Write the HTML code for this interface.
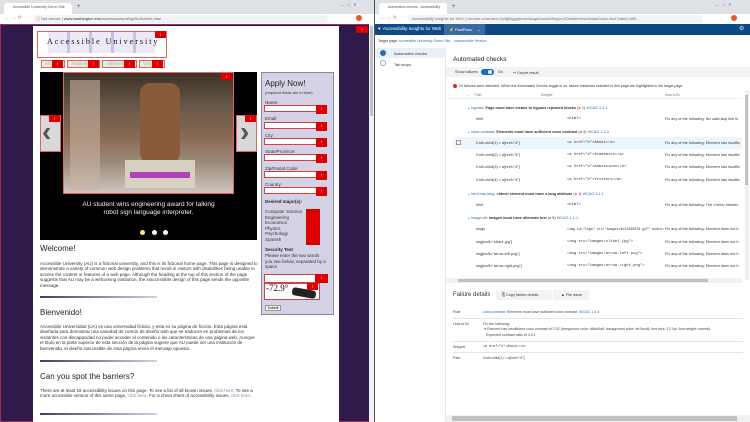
<!DOCTYPE html>
<html><head><meta charset="utf-8"><style>
*{margin:0;padding:0;box-sizing:border-box}
body{width:750px;height:422px;overflow:hidden;position:relative;font-family:"Liberation Sans",sans-serif;background:#fff}
.a{position:absolute}
.t{position:absolute;white-space:nowrap}
.bang{position:absolute;background:#d00;width:11px;height:7px;color:#fff;font-size:4px;text-align:center;line-height:7px}
.bang::after{content:"!"}
.inp{position:absolute;left:264px;width:63px;height:7px;background:#fff;border:1px solid #c44}
.lbl{position:absolute;left:265px;font-size:4.5px;color:#333}
.mono{font-family:"Liberation Mono",monospace}
.row{position:absolute;left:446px;width:296px;height:12px;font-size:3.8px;color:#333}
.row span{position:absolute;top:4px;white-space:nowrap}
.hline{position:absolute;left:40px;width:117px;height:2px;background:linear-gradient(90deg,#4a3a6a,#d8d0e4)}
.p{position:absolute;left:40px;width:218px;font-size:4.5px;line-height:5.4px;color:#333}
.h{position:absolute;left:40px;font-size:8px;color:#222}
.nb{position:absolute;top:60px;height:8px;background:#efecde;border:1px solid #d66;font-size:4.5px;color:#aaa;line-height:6px;padding-left:3px;overflow:hidden}
</style></head><body>
<!-- LEFT WINDOW -->
<div class="a" style="left:0;top:0;width:374px;height:14px;background:#dee1e6"></div>
<div class="a" style="left:4px;top:3px;width:68px;height:11px;background:#fff;border-radius:3px 3px 0 0"></div>
<div class="t" style="left:13px;top:5px;font-size:3.6px;color:#555">Accessible University Demo Site</div>
<div class="t" style="left:77px;top:4px;font-size:6px;color:#555">+</div>
<div class="t" style="left:340px;top:2px;font-size:4px;color:#666">—&nbsp;&nbsp;&nbsp;□&nbsp;&nbsp;&nbsp;✕</div>
<div class="a" style="left:0;top:14px;width:374px;height:10px;background:#fff"></div>
<div class="t" style="left:5px;top:15px;font-size:5px;color:#888">← → ⟳</div>
<div class="a" style="left:33px;top:15px;width:295px;height:8px;background:#f1f3f4;border-radius:4px"></div>
<div class="t" style="left:36px;top:16px;font-size:4px;color:#666">ⓘ Not secure | <b style="color:#333;font-weight:normal">www.washington.edu</b>/accesscomputing/AU/before.html</div>
<div class="a" style="left:356px;top:15px;width:6px;height:6px;border-radius:50%;background:#e8572a"></div>
<!-- page -->
<div class="a" style="left:0;top:24px;width:371px;height:398px;background:#2e1a4b;border:1px solid #a0305a"></div>
<div class="a" style="left:369px;top:24px;width:5px;height:398px;background:#f1f1f1"></div>
<div class="a" style="left:370px;top:26px;width:3px;height:90px;background:#c1c1c1"></div>
<div class="bang" style="left:356px;top:26px;width:12px"></div>
<div class="a" style="left:33px;top:26px;width:306px;height:396px;background:#fff"></div>
<!-- logo -->
<div class="a" style="left:37px;top:31px;width:130px;height:27px;border:1px solid #d66"></div>
<div class="a" style="left:48px;top:32px;width:107px;height:21px;background:repeating-linear-gradient(90deg,#eceaf6 0 19px,#c7c2e0 19px 22px)"></div>
<div class="t" style="left:47px;top:37px;font-family:'Liberation Serif',serif;font-size:8px;letter-spacing:2px;color:#111">Accessible University</div>
<div class="bang" style="left:155px;top:31px"></div>
<div class="nb" style="left:41px;width:24px">About</div><div class="bang" style="left:52px;top:60px;height:8px"></div>
<div class="nb" style="left:67px;width:33px">Academics</div><div class="bang" style="left:88px;top:60px;height:8px"></div>
<div class="nb" style="left:102px;width:35px">Admissions</div><div class="bang" style="left:124px;top:60px;height:8px"></div>
<div class="nb" style="left:139px;width:26px">Visitors</div><div class="bang" style="left:152px;top:60px;height:8px"></div>
<!-- slideshow -->
<div class="a" style="left:40px;top:72px;width:217px;height:168px;background:#000"></div>
<div class="a" style="left:63px;top:72px;width:171px;height:122px;border:1px solid #d66;background:linear-gradient(180deg,#3d3328 0%,#6b5a48 30%,#8a6b55 55%,#9c8c7a 75%,#cfc6c0 100%)"></div>
<div class="a" style="left:140px;top:83px;width:40px;height:80px;background:#8b5a3a;border-radius:10px"></div>
<div class="a" style="left:70px;top:80px;width:30px;height:110px;background:#c9b2a0;opacity:.6"></div>
<div class="a" style="left:125px;top:160px;width:70px;height:28px;background:#d8d0c0"></div>
<div class="a" style="left:130px;top:172px;width:60px;height:6px;background:#b040c0"></div>
<div class="bang" style="left:221px;top:73px"></div>
<div class="a" style="left:40px;top:115px;width:21px;height:37px;background:#d8d8d8;border:1px solid #d66"></div>
<div class="t" style="left:42px;top:116px;font-size:28px;font-weight:bold;color:#555">‹</div>
<div class="bang" style="left:49px;top:115px"></div>
<div class="a" style="left:236px;top:115px;width:21px;height:37px;background:#d8d8d8;border:1px solid #d66"></div>
<div class="t" style="left:240px;top:116px;font-size:28px;font-weight:bold;color:#555">›</div>
<div class="bang" style="left:245px;top:115px"></div>
<div class="t" style="left:40px;top:201px;width:217px;text-align:center;font-size:6.5px;color:#eee;line-height:8px;white-space:normal">AU student wins engineering award for talking<br>robot sign language interpreter.</div>
<div class="a" style="left:140px;top:230px;width:5px;height:5px;border-radius:50%;background:#ffea80"></div>
<div class="a" style="left:152px;top:230px;width:5px;height:5px;border-radius:50%;background:#fff"></div>
<div class="a" style="left:163px;top:230px;width:5px;height:5px;border-radius:50%;background:#fff"></div>
<!-- form -->
<div class="a" style="left:261px;top:72px;width:73px;height:243px;background:#d5d2e6;border:1px solid #8a86a4"></div>
<div class="t" style="left:265px;top:79px;font-size:8px;color:#222">Apply Now!</div>
<div class="t" style="left:265px;top:90px;font-size:4px;color:#333">(required fields are in blue)</div>
<div class="lbl" style="top:100px">Name:</div><div class="inp" style="top:105px"></div><div class="bang" style="left:316px;top:105px;height:9px"></div>
<div class="lbl" style="top:116px">Email:</div><div class="inp" style="top:122px"></div><div class="bang" style="left:316px;top:122px;height:9px"></div>
<div class="lbl" style="top:133px">City:</div><div class="inp" style="top:138px"></div><div class="bang" style="left:316px;top:138px;height:9px"></div>
<div class="lbl" style="top:149px">State/Province:</div><div class="inp" style="top:154px"></div><div class="bang" style="left:316px;top:154px;height:9px"></div>
<div class="lbl" style="top:166px">Zip/Postal Code:</div><div class="inp" style="top:171px"></div><div class="bang" style="left:316px;top:171px;height:9px"></div>
<div class="lbl" style="top:182px">Country:</div><div class="inp" style="top:187px"></div><div class="bang" style="left:316px;top:187px;height:9px"></div>
<div class="t" style="left:265px;top:199px;font-size:4.5px;font-weight:bold;color:#222">Desired major(s):</div>
<div class="t" style="left:265px;top:209px;font-size:4.5px;color:#333;line-height:5.5px">Computer Science<br>Engineering<br>Economics<br>Physics<br>Psychology<br>Spanish</div>
<div class="a" style="left:306px;top:209px;width:14px;height:36px;background:#d00"></div>
<div class="t" style="left:265px;top:247px;font-size:4.5px;font-weight:bold;color:#222">Security Test</div>
<div class="t" style="left:265px;top:253px;font-size:4.5px;color:#333;line-height:5.5px">Please enter the two words<br>you see below, separated by a<br>space</div>
<div class="a" style="left:264px;top:274px;width:64px;height:9px;background:#fff;border:1px solid #c44"></div><div class="bang" style="left:315px;top:274px;height:9px;width:13px"></div>
<div class="a" style="left:264px;top:283px;width:56px;height:17px;background:#fff;border:1px solid #c44"></div>
<div class="t" style="left:266px;top:283px;font-family:'Liberation Serif',serif;font-size:9px;color:#111">-72.9°</div>
<div class="a" style="left:292px;top:289px;width:24px;height:8px;background:#222;transform:rotate(10deg);border-radius:3px"></div>
<div class="bang" style="left:307px;top:283px;height:7px"></div>
<div class="a" style="left:265px;top:305px;width:16px;height:6px;background:#f4f4f4;border:1px solid #999;font-size:3.5px;text-align:center;line-height:4px">Submit</div>
<!-- text -->
<div class="h" style="top:244px">Welcome!</div>
<div class="p" style="top:261px">Accessible University (AU) is a fictional university, and this is its fictional home page. This page is designed to demonstrate a variety of common web design problems that result in visitors with disabilities being unable to access the content or features of a web page. Although the heading at the top of this section of the page suggests that AU may be a welcoming institution, the inaccessible design of this page sends the opposite message.</div>
<div class="hline" style="top:296px"></div>
<div class="h" style="top:308px">Bienvenido!</div>
<div class="p" style="top:324px">Accessible Universidad (UA) es una universidad ficticia, y esta es su página de ficción. Esta página está diseñada para demostrar una variedad de común de diseño web que se traducen en problemas de los visitantes con discapacidad no poder acceder al contenido o las características de una página web. Aunque el título en la parte superior de esta sección de la página sugiere que AU puede ser una institución de bienvenida, el diseño inaccesible de esta página envía el mensaje opuesto.</div>
<div class="hline" style="top:360px"></div>
<div class="h" style="top:372px">Can you spot the barriers?</div>
<div class="p" style="top:388px">There are at least 18 accessibility issues on this page. To see a list of all known issues, <span style="color:#88a">click here</span>. To see a more accessible version of this same page, <span style="color:#88a">click here</span>. For a cheat sheet of accessibility issues, <span style="color:#88a">click here</span>.</div>
<div class="hline" style="top:413px"></div>

<!-- RIGHT WINDOW -->
<div class="a" style="left:374px;top:0;width:1px;height:422px;background:#555"></div>
<div class="a" style="left:375px;top:0;width:375px;height:14px;background:#dee1e6"></div>
<div class="a" style="left:379px;top:3px;width:68px;height:11px;background:#fff;border-radius:3px 3px 0 0"></div>
<div class="t" style="left:388px;top:5px;font-size:3.6px;color:#555">Automated checks - Accessibility</div>
<div class="t" style="left:452px;top:4px;font-size:6px;color:#555">+</div>
<div class="t" style="left:715px;top:2px;font-size:4px;color:#666">—&nbsp;&nbsp;&nbsp;□&nbsp;&nbsp;&nbsp;✕</div>
<div class="a" style="left:375px;top:14px;width:375px;height:10px;background:#fff"></div>
<div class="t" style="left:380px;top:15px;font-size:5px;color:#888">← → ⟳</div>
<div class="a" style="left:408px;top:15px;width:295px;height:8px;background:#f1f3f4;border-radius:4px"></div>
<div class="t" style="left:412px;top:16px;font-size:4px;color:#777">Accessibility Insights for Web | chrome-extension://pbjjkligggfmakdaogkfomddhfmpjeni/DetailsView/detailsView.html?tabId=655</div>
<div class="a" style="left:731px;top:15px;width:6px;height:6px;border-radius:50%;background:#e8572a"></div>
<div class="a" style="left:375px;top:24px;width:375px;height:11px;background:#0f4a85"></div>
<div class="t" style="left:378px;top:26px;font-size:4.5px;color:#fff">♥&nbsp; Accessibility Insights for Web</div>
<div class="a" style="left:444px;top:24px;width:41px;height:11px;background:#3a6aa0"></div>
<div class="t" style="left:449px;top:27px;font-size:4px;color:#fff">⚡ FastPass &nbsp;&nbsp;&nbsp;&nbsp;⌄</div>
<div class="t" style="left:739px;top:25px;font-size:6px;color:#cde">⚙</div>
<div class="t" style="left:378px;top:39px;font-size:3.6px;color:#333">Target page: <span style="color:#3a6fb0">Accessible University Demo Site - Inaccessible Version</span></div>
<div class="a" style="left:375px;top:47px;width:71px;height:375px;background:#fff;border-right:1px solid #e6e6e6"></div>
<div class="a" style="left:375px;top:48px;width:71px;height:10px;background:#eaf0f8"></div>
<div class="a" style="left:380px;top:50px;width:6px;height:6px;border-radius:50%;background:#2b6cb0"></div>
<div class="t" style="left:394px;top:51px;font-size:4px;color:#333">Automated checks</div>
<div class="a" style="left:380px;top:60px;width:6px;height:6px;border-radius:50%;border:1px solid #aaa"></div>
<div class="t" style="left:394px;top:62px;font-size:4px;color:#333">Tab stops</div>
<div class="t" style="left:453px;top:56px;font-size:6.5px;color:#222">Automated checks</div>
<div class="a" style="left:446px;top:67px;width:304px;height:10px;background:#f3f3f3"></div>
<div class="t" style="left:455px;top:70px;font-size:3.8px;color:#333">Show failures</div>
<div class="a" style="left:481px;top:69px;width:13px;height:6px;border-radius:3px;background:#1a6ac8"></div>
<div class="a" style="left:488px;top:70px;width:4px;height:4px;border-radius:50%;background:#fff"></div>
<div class="t" style="left:498px;top:70px;font-size:3.8px;color:#333">On</div>
<div class="t" style="left:513px;top:70px;font-size:3.8px;color:#333"><span style="color:#2b6cb0">↦</span> Export result</div>
<div class="a" style="left:453px;top:84px;width:4px;height:4px;border-radius:50%;background:#d22"></div>
<div class="t" style="left:459px;top:84px;font-size:3.6px;color:#333">24 failures were detected. When the Automated Checks toggle is on, failure instances selected in this page are highlighted in the target page.</div>
<div class="t" style="left:467px;top:93px;font-size:3.4px;color:#777">⌄&nbsp;&nbsp;&nbsp;&nbsp;&nbsp;Path</div>
<div class="t" style="left:541px;top:93px;font-size:3.4px;color:#777">Snippet</div>
<div class="t" style="left:665px;top:93px;font-size:3.4px;color:#777">How to fix</div>
<div class="a" style="left:446px;top:98px;width:296px;height:1px;background:#eee"></div>

<div class="row" style="top:101px"><span style="left:21px">⌄ <span style="position:static;color:#2b6cb0">bypass</span>: <b>Page must have means to bypass repeated blocks</b> (<span style="position:static;color:#d22">●</span> 1) <span style="position:static;color:#2b6cb0">WCAG 2.4.1</span></span></div>
<div class="row" style="top:113px"><span style="left:30px">html</span><span class="mono" style="left:121px">&lt;html&gt;</span><span style="left:219px">Fix any of the following: No valid skip link fo</span></div>
<div class="row" style="top:125px"><span style="left:21px">⌄ <span style="position:static;color:#2b6cb0">color-contrast</span>: <b>Elements must have sufficient color contrast</b> (<span style="position:static;color:#d22">●</span> 4) <span style="position:static;color:#2b6cb0">WCAG 1.4.3</span></span></div>
<div class="row" style="top:137px;left:453px;width:289px;background:#eef4fb"><span style="left:3px;top:3px;width:5px;height:5px;border:1px solid #999"></span><span style="left:23px">li:nth-child(1) &gt; a[href="#"]</span><span class="mono" style="left:114px">&lt;a href="#"&gt;About&lt;/a&gt;</span><span style="left:212px">Fix any of the following: Element has insuffic</span></div>
<div class="row" style="top:149px"><span style="left:30px">li:nth-child(2) &gt; a[href="#"]</span><span class="mono" style="left:121px">&lt;a href="#"&gt;Academics&lt;/a&gt;</span><span style="left:219px">Fix any of the following: Element has insuffic</span></div>
<div class="row" style="top:161px"><span style="left:30px">li:nth-child(3) &gt; a[href="#"]</span><span class="mono" style="left:121px">&lt;a href="#"&gt;Admissions&lt;/a&gt;</span><span style="left:219px">Fix any of the following: Element has insuffic</span></div>
<div class="row" style="top:174px"><span style="left:30px">li:nth-child(4) &gt; a[href="#"]</span><span class="mono" style="left:121px">&lt;a href="#"&gt;Visitors&lt;/a&gt;</span><span style="left:219px">Fix any of the following: Element has insuffic</span></div>
<div class="row" style="top:187px"><span style="left:21px">⌄ <span style="position:static;color:#2b6cb0">html-has-lang</span>: <b>&lt;html&gt; element must have a lang attribute</b> (<span style="position:static;color:#d22">●</span> 1) <span style="position:static;color:#2b6cb0">WCAG 3.1.1</span></span></div>
<div class="row" style="top:199px"><span style="left:30px">html</span><span class="mono" style="left:121px">&lt;html&gt;</span><span style="left:219px">Fix any of the following: The &lt;html&gt; elemen</span></div>
<div class="row" style="top:211px"><span style="left:21px">⌄ <span style="position:static;color:#2b6cb0">image-alt</span>: <b>Images must have alternate text</b> (<span style="position:static;color:#d22">●</span> 5) <span style="position:static;color:#2b6cb0">WCAG 1.1.1</span></span></div>
<div class="row" style="top:223px"><span style="left:30px">#logo</span><span class="mono" style="left:121px;font-size:3.3px">&lt;img id="logo" src="images/au12345678.gif" width=</span><span style="left:219px">Fix any of the following: Element does not h</span></div>
<div class="row" style="top:236px"><span style="left:30px">img[src$="slide1.jpg"]</span><span class="mono" style="left:121px">&lt;img src="images/slide1.jpg"&gt;</span><span style="left:219px">Fix any of the following: Element does not h</span></div>
<div class="row" style="top:248px"><span style="left:30px">img[src$="arrow-left.png"]</span><span class="mono" style="left:121px">&lt;img src="images/arrow-left.png"&gt;</span><span style="left:219px">Fix any of the following: Element does not h</span></div>
<div class="row" style="top:260px"><span style="left:30px">img[src$="arrow-right.png"]</span><span class="mono" style="left:121px">&lt;img src="images/arrow-right.png"&gt;</span><span style="left:219px">Fix any of the following: Element does not h</span></div>
<div class="a" style="left:446px;top:278px;width:296px;height:5px;background:#f1f1f1"></div>
<div class="a" style="left:458px;top:279px;width:250px;height:3px;background:#c1c1c1"></div>
<div class="a" style="left:745px;top:90px;width:4px;height:190px;background:#f1f1f1"></div>
<div class="a" style="left:745px;top:95px;width:3px;height:90px;background:#c1c1c1"></div>

<div class="t" style="left:453px;top:292px;font-size:6px;color:#333">Failure details</div>
<div class="a" style="left:496px;top:290px;width:56px;height:10px;background:#f3f3f3"></div>
<div class="t" style="left:502px;top:293px;font-size:3.8px;color:#333">⎘ Copy failure details</div>
<div class="a" style="left:553px;top:290px;width:36px;height:10px;background:#f3f3f3"></div>
<div class="t" style="left:561px;top:293px;font-size:3.8px;color:#333">▲ File issue</div>
<div class="t" style="left:453px;top:310px;font-size:3.6px;color:#444">Rule</div>
<div class="t" style="left:483px;top:310px;font-size:3.6px;color:#444"><span style="color:#2b6cb0">color-contrast</span>: Elements must have sufficient color contrast &nbsp;<span style="color:#2b6cb0">WCAG 1.4.3</span></div>
<div class="a" style="left:453px;top:318px;width:290px;height:1px;background:#e4e4e4"></div>
<div class="t" style="left:453px;top:322px;font-size:3.6px;color:#444">How to fix</div>
<div class="t" style="left:483px;top:322px;font-size:3.6px;color:#444;line-height:5.3px">Fix the following:<br>&nbsp;● Element has insufficient color contrast of 2.52 (foreground color: #8a94a8, background color: #e7ecd8, font size: 12.0pt, font weight: normal).<br>&nbsp;&nbsp;&nbsp;Expected contrast ratio of 4.5:1</div>
<div class="a" style="left:453px;top:341px;width:290px;height:1px;background:#e4e4e4"></div>
<div class="t" style="left:453px;top:345px;font-size:3.6px;color:#444">Snippet</div>
<div class="t mono" style="left:483px;top:345px;font-size:3.4px;color:#444">&lt;a href="#"&gt;About&lt;/a&gt;</div>
<div class="a" style="left:453px;top:352px;width:290px;height:1px;background:#e4e4e4"></div>
<div class="t" style="left:453px;top:356px;font-size:3.6px;color:#444">Path</div>
<div class="t" style="left:483px;top:356px;font-size:3.6px;color:#444">li:nth-child(1) &gt; a[href="#"]</div>
<div class="a" style="left:446px;top:415px;width:304px;height:7px;background:#f1f1f1"></div>
<div class="a" style="left:452px;top:416px;width:285px;height:5px;background:#c1c1c1"></div>
</body></html>
